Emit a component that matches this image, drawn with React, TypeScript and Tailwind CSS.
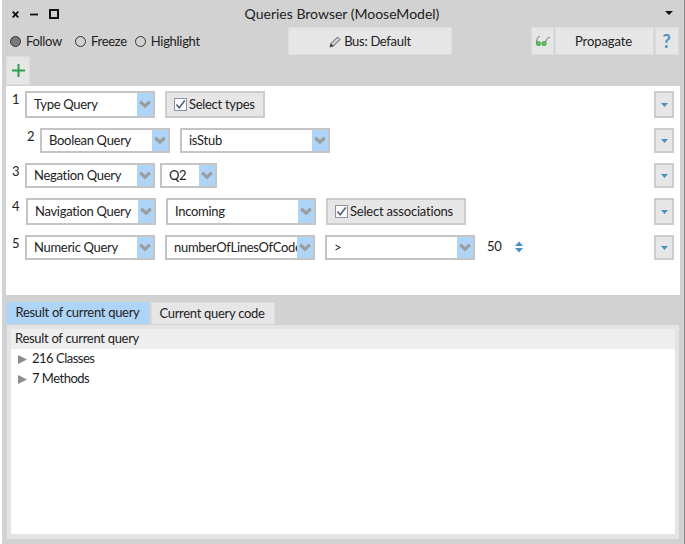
import React from "react";

const Chev = () => (
  <svg width="12" height="9" viewBox="0 0 12 9" className="block">
    <path d="M1.2 1.8 L6 6.2 L10.8 1.8" fill="none" stroke="#9c9c9c" strokeWidth="3.2" />
  </svg>
);

function Select({ label, w, h = "h-[25px]", className = "" }: { label: string; w: string; h?: string; className?: string }) {
  return (
    <div className={`${w} ${h} ${className} flex shrink-0 border-2 border-[#c4c4c4] bg-white`}>
      <div className="flex-1 min-w-0 overflow-hidden whitespace-nowrap pl-[7px] flex items-center">{label}</div>
      <div className="w-[16px] shrink-0 bg-[#aed4f7] flex items-center justify-center">
        <Chev />
      </div>
    </div>
  );
}

function Arrow({ h = "h-[25px]" }: { h?: string }) {
  return (
    <div className={`ml-auto w-[20px] ${h} shrink-0 border-2 border-[#cccccc] bg-[#e6e6e6] flex items-center justify-center`}>
      <svg width="7" height="4" viewBox="0 0 7 4"><path d="M0 0H7L3.5 4Z" fill="#4a90c0" /></svg>
    </div>
  );
}

function Check({ label, w, h }: { label: string; w: string; h: string }) {
  return (
    <div className={`${w} ${h} shrink-0 border-2 border-[#cccccc] bg-[#e6e6e6] flex items-center pl-[7px] gap-[2px]`}>
      <svg width="13" height="13" viewBox="0 0 13 13" className="shrink-0">
        <rect x="0.5" y="0.5" width="12" height="12" fill="#fafafa" stroke="#8c93a6" />
        <path d="M2.5 6.5 L5.2 9.8 L10.8 2.5" fill="none" stroke="#4a5a78" strokeWidth="1.4" />
      </svg>
      <span>{label}</span>
    </div>
  );
}

function Radio({ label, on, className = "" }: { label: string; on?: boolean; className?: string }) {
  return (
    <div className={`flex items-center gap-[5px] ${className}`}>
      <span className={`w-[11px] h-[11px] rounded-full border border-[#333] ${on ? "bg-[#7a7a7a]" : "bg-transparent"}`} />
      <span>{label}</span>
    </div>
  );
}

function Num({ n }: { n: number }) {
  return <span className="w-[19px] shrink-0 pl-[6px] self-start leading-[17px]">{n}</span>;
}

export default function App() {
  return (
    <div className="w-[685px] h-[544px] overflow-hidden bg-[#d2d2d2] border-l-2 border-white border-r border-r-[#8a8a8a] flex flex-col text-[13px] tracking-[-0.3px] text-[#222222] font-['Lato','Noto_Sans',sans-serif]">
      {/* title bar */}
      <div className="h-[27px] shrink-0 relative flex items-center justify-center text-[14px] tracking-normal">
        <div className="absolute left-[10px] top-[9px] flex items-center gap-[11px]">
          <svg width="7" height="7" viewBox="0 0 7 7"><path d="M0.7 0.7L6.3 6.3M6.3 0.7L0.7 6.3" stroke="#111" strokeWidth="1.9" /></svg>
          <svg width="8" height="7" viewBox="0 0 8 7"><path d="M0 3.5H8" stroke="#111" strokeWidth="1.8" /></svg>
          <span className="w-[10px] h-[10px] border-2 border-[#111]" />
        </div>
        <span className="-ml-[2px]">Queries Browser (MooseModel)</span>
        <svg className="absolute right-[11px] top-[11px]" width="8" height="4" viewBox="0 0 8 4"><path d="M0 0H8L4 4Z" fill="#111" /></svg>
      </div>
      {/* toolbar */}
      <div className="h-[28px] shrink-0 flex items-center pl-[8px] pr-[4px] pt-[1px]">
        <div className="w-[278px] flex items-center">
          <Radio label="Follow" on />
          <Radio label="Freeze" className="ml-[13px]" />
          <Radio label="Highlight" className="ml-[8px]" />
        </div>
        <div className="w-[164px] h-[28px] -mt-[1px] bg-[#e6e6e6] border border-[#dcdcdc] flex items-center justify-center gap-[3px] pt-[1px]">
          <svg width="12" height="12" viewBox="0 0 12 12"><path d="M1 11L2 7.5L8.5 1L11 3.5L4.5 10Z" fill="#cfcfcf" stroke="#5a5a5a" /><path d="M1 11L2 7.5L4.5 10Z" fill="#444" /></svg>
          Bus: Default
        </div>
        <div className="ml-[79px] w-[23px] h-[28px] -mt-[1px] bg-[#e6e6e6] border border-[#dcdcdc] flex items-center justify-center">
          <svg width="16" height="12" viewBox="0 0 16 12">
            <circle cx="3.5" cy="8.5" r="2.6" fill="#5cb85c" />
            <circle cx="9" cy="8.5" r="2.6" fill="#5cb85c" />
            <path d="M1.5 7.5C2 3 3 1.5 5 1.5M10.5 7.5C12 3 13 1.5 15 3" fill="none" stroke="#666" strokeWidth="0.9" />
          </svg>
        </div>
        <div className="ml-[1px] w-[99px] h-[28px] -mt-[1px] bg-[#e6e6e6] border border-[#dcdcdc] flex items-center justify-center pt-[1px] pr-[2px] tracking-[-0.1px]">Propagate</div>
        <div className="ml-[1px] w-[24px] h-[28px] -mt-[1px] bg-[#e6e6e6] border border-[#dcdcdc] flex items-center justify-center pr-[1px] text-[#4a90c0] font-bold text-[18px]">?</div>
      </div>
      {/* add */}
      <div className="h-[31px] shrink-0 pl-[4px] pt-[1px]">
        <div className="w-[24px] h-[29px] bg-[#e6e6e6] border border-[#dcdcdc] flex items-center justify-center">
          <svg width="13" height="13" viewBox="0 0 13 13"><path d="M6.5 0V13M0 6.5H13" stroke="#2e9e4f" strokeWidth="2" /></svg>
        </div>
      </div>
      {/* queries */}
      <div className="h-[209px] shrink-0 ml-[4px] mr-[4px] bg-white pt-[5px] pr-[6px] flex flex-col gap-[10px]">
        <div className="flex items-start">
          <Num n={1} />
          <Select label="Type Query" w="w-[130px]" h="h-[27px]" />
          <Check label="Select types" w="w-[100px] ml-[10px]" h="h-[27px]" />
          <Arrow h="h-[27px]" />
        </div>
        <div className="flex items-start">
          <span className="w-[34px] shrink-0 pl-[21px] leading-[17px]">2</span>
          <Select label="Boolean Query" w="w-[130px]" />
          <Select label="isStub" w="w-[150px] ml-[10px]" />
          <Arrow />
        </div>
        <div className="flex items-start">
          <Num n={3} />
          <Select label="Negation Query" w="w-[130px]" />
          <Select label="Q2" w="w-[57px] ml-[5px]" />
          <Arrow />
        </div>
        <div className="flex items-start">
          <span className="w-[20px] shrink-0 pl-[6px] leading-[17px]">4</span>
          <Select label="Navigation Query" w="w-[130px]" h="h-[27px]" />
          <Select label="Incoming" w="w-[150px] ml-[10px]" h="h-[27px]" />
          <Check label="Select associations" w="w-[140px] ml-[10px] tracking-[-0.2px]" h="h-[27px]" />
          <Arrow h="h-[27px]" />
        </div>
        <div className="flex items-start">
          <Num n={5} />
          <Select label="Numeric Query" w="w-[130px]" />
          <Select label="numberOfLinesOfCode" w="w-[150px] ml-[10px]" />
          <Select label=">" w="w-[150px] ml-[10px]" />
          <span className="ml-[12px] leading-[22px]">50</span>
          <svg className="ml-[14px] mt-[6px]" width="8" height="12" viewBox="0 0 8 12"><path d="M0 5L4 0.5L8 5ZM0 7L4 11.5L8 7Z" fill="#4a90c0" /></svg>
          <Arrow />
        </div>
      </div>
      {/* tabs */}
      <div className="h-[22px] mt-[7px] shrink-0 pl-[4px] flex items-stretch gap-[2px]">
        <div className="w-[143px] bg-[#aed4f7] flex items-center justify-center">Result of current query</div>
        <div className="w-[124px] bg-[#e6e6e6] border border-[#dcdcdc] border-b-0 flex items-center justify-center pr-[2px]">Current query code</div>
      </div>
      {/* result */}
      <div className="h-[214px] mt-[1px] shrink-0 ml-[5px] mr-[5px] bg-[#e4e4e4] pt-[4px] px-[4px] pb-[5px] flex">
        <div className="flex-1 bg-white flex flex-col">
          <div className="h-[20px] bg-[#eeeeee] flex items-center pl-[4px]">Result of current query</div>
          <div className="h-[20px] flex items-center pl-[7px] gap-[5px] tracking-[-0.5px]">
            <svg width="9" height="9" viewBox="0 0 9 9"><path d="M0 0L9 4.5L0 9Z" fill="#8c8c8c" /></svg>
            216 Classes
          </div>
          <div className="h-[20px] flex items-center pl-[7px] gap-[5px] tracking-[-0.5px]">
            <svg width="9" height="9" viewBox="0 0 9 9"><path d="M0 0L9 4.5L0 9Z" fill="#8c8c8c" /></svg>
            7 Methods
          </div>
        </div>
      </div>
    </div>
  );
}
